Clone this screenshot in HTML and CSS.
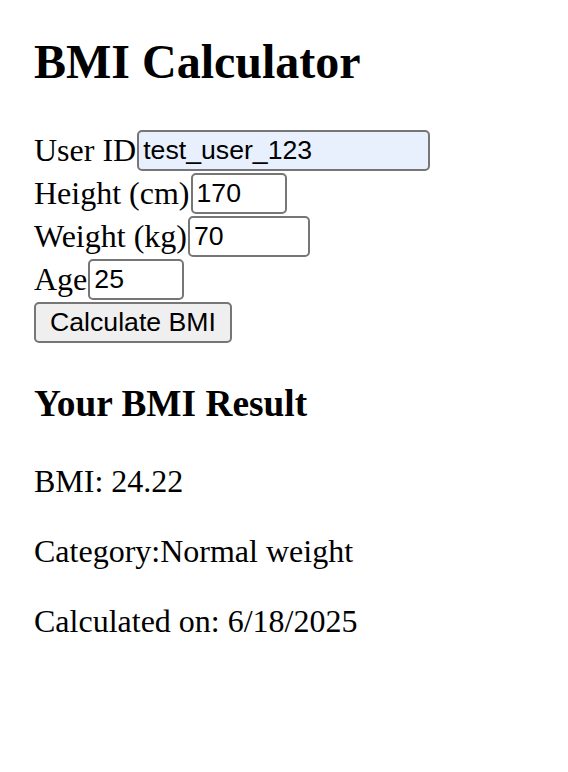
FILE: index.html
```html
<!DOCTYPE html>
<html>
<head>
<meta charset="utf-8">
<link rel="stylesheet" href="styles.css">
</head>
<body>
<div class="page">
  <h1 class="title">BMI Calculator</h1>
  <form class="form">
    <div class="row"><label class="label">User ID</label><input class="field field-user" type="text" value="test_user_123"></div>
    <div class="row"><label class="label">Height (cm)</label><input class="field field-num" type="text" value="170"></div>
    <div class="row"><label class="label">Weight (kg)</label><input class="field field-wide" type="text" value="70"></div>
    <div class="row"><label class="label">Age</label><input class="field field-num" type="text" value="25"></div>
    <div class="row"><button class="btn" type="button">Calculate BMI</button></div>
  </form>
  <h2 class="result-title">Your BMI Result</h2>
  <p class="line">BMI: 24.22</p>
  <p class="line">Category:Normal weight</p>
  <p class="line">Calculated on: 6/18/2025</p>
</div>
</body>
</html>
```
FILE: styles.css
```css
html, body { margin: 0; padding: 0; background: #fff; }
body { font-family: "Liberation Serif", "Times New Roman", serif; font-size: 32px; color: #000; }
.page { padding: 0 34px; }
.title { font-size: 48px; font-weight: bold; margin: 34px 0 40px; line-height: 55px; }
.form { margin: 0; }
.row { display: flex; align-items: center; height: 43px; }
.label { white-space: nowrap; }
.field {
  font-family: "Liberation Sans", Arial, sans-serif;
  font-size: 26.67px;
  height: 41px;
  box-sizing: border-box;
  border: 2px solid #767676;
  border-radius: 5px;
  padding: 2px 4px;
  margin: 0 0 0 1px;
  background: #fff;
  color: #000;
  outline: none;
}
.field-user { width: 293px; background: #e8f0fe; }
.field-num { width: 96px; }
.field-wide { width: 122px; }
.btn {
  font-family: "Liberation Sans", Arial, sans-serif;
  font-size: 26.67px;
  height: 41px;
  width: 198px;
  box-sizing: border-box;
  border: 2px solid #767676;
  border-radius: 5px;
  background: #efefef;
  color: #000;
  padding: 0 12px;
  margin: 0;
}
.result-title { font-size: 37.33px; font-weight: bold; margin: 38px 0 38px; line-height: 43px; }
.line { margin: 33px 0; line-height: 37px; }
```
